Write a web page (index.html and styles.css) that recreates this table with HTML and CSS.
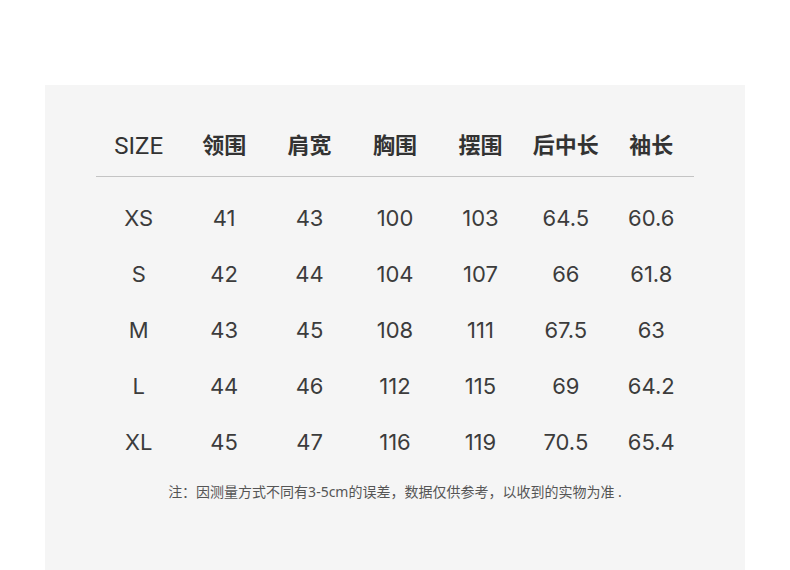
FILE: index.html
```html
<!DOCTYPE html>
<html lang="zh">
<head>
<meta charset="utf-8">
<link rel="stylesheet" href="styles.css">
</head>
<body>
<div class="panel">
  <div class="table">
    <div class="row head">
      <div class="cell size">SIZE</div>
      <div class="cell">领围</div>
      <div class="cell">肩宽</div>
      <div class="cell">胸围</div>
      <div class="cell">摆围</div>
      <div class="cell">后中长</div>
      <div class="cell">袖长</div>
    </div>
    <div class="body">
      <div class="row"><div class="cell">XS</div><div class="cell">41</div><div class="cell">43</div><div class="cell">100</div><div class="cell">103</div><div class="cell">64.5</div><div class="cell">60.6</div></div>
      <div class="row"><div class="cell">S</div><div class="cell">42</div><div class="cell">44</div><div class="cell">104</div><div class="cell">107</div><div class="cell">66</div><div class="cell">61.8</div></div>
      <div class="row"><div class="cell">M</div><div class="cell">43</div><div class="cell">45</div><div class="cell">108</div><div class="cell">111</div><div class="cell">67.5</div><div class="cell">63</div></div>
      <div class="row"><div class="cell">L</div><div class="cell">44</div><div class="cell">46</div><div class="cell">112</div><div class="cell">115</div><div class="cell">69</div><div class="cell">64.2</div></div>
      <div class="row"><div class="cell">XL</div><div class="cell">45</div><div class="cell">47</div><div class="cell">116</div><div class="cell">119</div><div class="cell">70.5</div><div class="cell">65.4</div></div>
    </div>
  </div>
  <p class="note">注：因测量方式不同有3-5cm的误差，数据仅供参考，以收到的实物为准 .</p>
</div>
</body>
</html>
```
FILE: styles.css
```css
html, body {
  margin: 0;
  padding: 0;
  background: #ffffff;
}
body {
  font-family: "Noto Sans", "Noto Sans CJK SC", sans-serif;
  color: #333;
}
.panel {
  margin: 85px 0 0 45px;
  width: 700px;
  height: 485px;
  background: #f5f5f5;
  padding: 24px 51px 0;
  box-sizing: border-box;
}
.row {
  display: grid;
  grid-template-columns: repeat(7, 1fr);
  align-items: center;
  text-align: center;
}
.head {
  height: 67px;
  border-bottom: 1px solid #c4c4c4;
  font-size: 22px;
  font-weight: 700;
  color: #333;
}
.head .size {
  padding-top: 6px;
  font-family: Roboto, sans-serif;
  font-size: 24px;
  font-weight: 400;
}
.body {
  padding-top: 13px;
}
.body .row {
  height: 56px;
  font-family: Inter, "Noto Sans", sans-serif;
  font-size: 22px;
  color: #3c3c3c;
}
.note {
  margin: 11px 0 0;
  text-align: center;
  font-size: 14px;
  line-height: 22px;
  color: #555;
}
```
